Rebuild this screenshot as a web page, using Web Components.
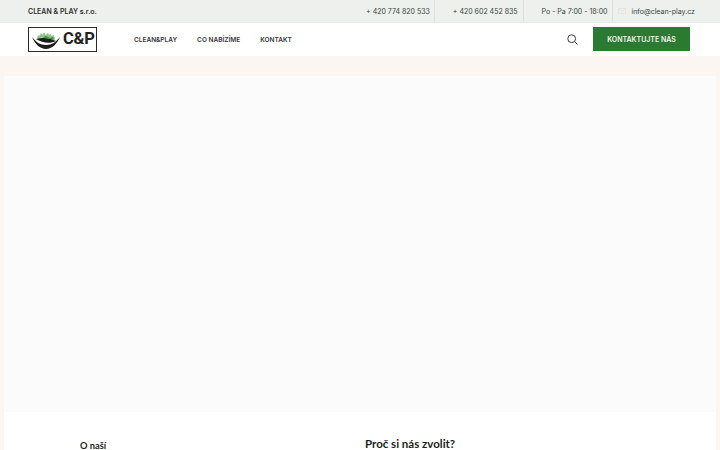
<!DOCTYPE html>
<html lang="cs">
<head>
<meta charset="utf-8">
<title>CLEAN &amp; PLAY s.r.o.</title>
<style>
  html, body { margin: 0; height: 100%; overflow: hidden; background: #fcf6f3; }
</style>
</head>
<body>
<top-bar>
  <span slot="brand">CLEAN &amp; PLAY s.r.o.</span>
</top-bar>
<main-nav></main-nav>
<hero-panel></hero-panel>
<intro-columns></intro-columns>

<script>
class TopBar extends HTMLElement {
  constructor() {
    super();
    this.attachShadow({ mode: 'open' });
    this.shadowRoot.innerHTML = /*html*/ `
    <style>
      :host {
        display: flex;
        justify-content: space-between;
        align-items: stretch;
        height: 22px;
        padding-left: 28px;
        padding-right: 25px;
        background: #eef0ee;
        border-bottom: 1px solid #e8e8e6;
        font: 7px/23px Inter, "Liberation Sans", sans-serif;
        color: #31463a;
        white-space: nowrap;
      }
      .brand { font-weight: 600; color: #2b2f2c; }
      .items { display: flex; }
      .item { padding: 0 5px 0 18px; border-right: 1px solid #dfe1df; }
      .item:first-child { padding-right: 4px; }
      .item:last-child { border: 0; padding: 0 0 0 5px; display: flex; align-items: center; gap: 5px; }
      svg { display: block; }
    </style>
    <div class="brand"><slot name="brand"></slot></div>
    <div class="items">
      <div class="item">+ 420 774 820 533</div>
      <div class="item">+ 420 602 452 835</div>
      <div class="item">Po - Pa 7:00 - 18:00</div>
      <div class="item">
        <svg width="8" height="6" viewBox="0 0 8 6" fill="none" stroke="#e0e2e0" stroke-width=".7"><rect x=".4" y=".4" width="7.2" height="5.2"/><path d="M.4.6 4 3.4 7.6.6"/></svg>
        <span>info@clean-play.cz</span>
      </div>
    </div>`;
  }
}

class MainNav extends HTMLElement {
  constructor() {
    super();
    this.attachShadow({ mode: 'open' });
    this.shadowRoot.innerHTML = /*html*/ `
    <style>
      :host {
        display: flex;
        align-items: center;
        height: 33px;
        padding: 0 30px 0 28px;
        background: #fff;
      }
      .logo {
        box-sizing: border-box;
        width: 69px;
        height: 25px;
        border: 1px solid #2c2c2c;
        display: flex;
        align-items: center;
        gap: 3px;
        padding-left: 3px;
        font: 700 16.5px/1 Roboto, "Liberation Sans", sans-serif;
        letter-spacing: -.2px;
        color: #222;
      }
      .logo svg { margin-top: 1px; }
      .links {
        display: flex;
        gap: 20px;
        margin: 1px 0 0 37px;
        font: 600 6.5px/1 Inter, "Liberation Sans", sans-serif;
        color: #33363a;
      }
      .search { margin-left: auto; display: block; }
      .cta {
        margin: 0 0 1px 15px;
        width: 97px;
        height: 24px;
        background: #2a7a32;
        color: #f0f5ee;
        font: 600 7px/25px Inter, "Liberation Sans", sans-serif;
        text-align: center;
      }
    </style>
    <div class="logo">
      <svg width="28" height="18" viewBox="0 0 28 18">
        <path d="M5 8 6 4l1.500 1L9 2l1.500 2L12 1l1.500 3L16 2l1 2 2-1 .5 2L22 4l1 5c-6-3-12-3-18-1z" fill="#8cc67f"/>
        <path d="M7 8c4-2 9-1 15 1l-1-3-3 1-4-2-4 2z" fill="#3a9443"/>
        <path d="M0 6c3 7 8 12 14 12s11-5 14-12c-4 5-8 8-14 8S4 11 0 6z" fill="#1d1d1d"/>
        <path d="M4 8c6-2 14-1 20 2-6 3-14 2-20-2z" fill="#1d1d1d"/>
      </svg>
      <span>C&amp;P</span>
    </div>
    <div class="links"><span>CLEAN&amp;PLAY</span><span>CO NABÍZÍME</span><span>KONTAKT</span></div>
    <svg class="search" width="11" height="11" viewBox="0 0 11 11" fill="none" stroke="#3a3d3c" stroke-width="1"><circle cx="4.7" cy="4.7" r="3.9"/><path d="m7.6 7.6 3 3"/></svg>
    <div class="cta">KONTAKTUJTE NÁS</div>`;
  }
}

class HeroPanel extends HTMLElement {
  constructor() {
    super();
    this.attachShadow({ mode: 'open' });
    this.shadowRoot.innerHTML = /*html*/ `
    <style>
      :host {
        display: block;
        height: 336px;
        margin: 20px 4px 0;
        background: #fbfbfb;
      }
    </style>`;
  }
}

class IntroColumns extends HTMLElement {
  constructor() {
    super();
    this.attachShadow({ mode: 'open' });
    this.shadowRoot.innerHTML = /*html*/ `
    <style>
      :host {
        display: grid;
        grid-template-columns: 285px 1fr;
        height: 38px;
        margin: 0 4px;
        padding: 26px 0 0 76px;
        box-sizing: border-box;
        background: #fff;
        color: #1c1f22;
        font-family: Lato, "Liberation Sans", sans-serif;
        font-weight: 700;
      }
      .small { font-size: 9.3px; line-height: 9px; margin-top: 3px; }
      .large { font-size: 11.5px; line-height: 12px; }
    </style>
    <div class="small">O naší</div>
    <div class="large">Proč si nás zvolit?</div>`;
  }
}

customElements.define('top-bar', TopBar);
customElements.define('main-nav', MainNav);
customElements.define('hero-panel', HeroPanel);
customElements.define('intro-columns', IntroColumns);
</script>
</body>
</html>
